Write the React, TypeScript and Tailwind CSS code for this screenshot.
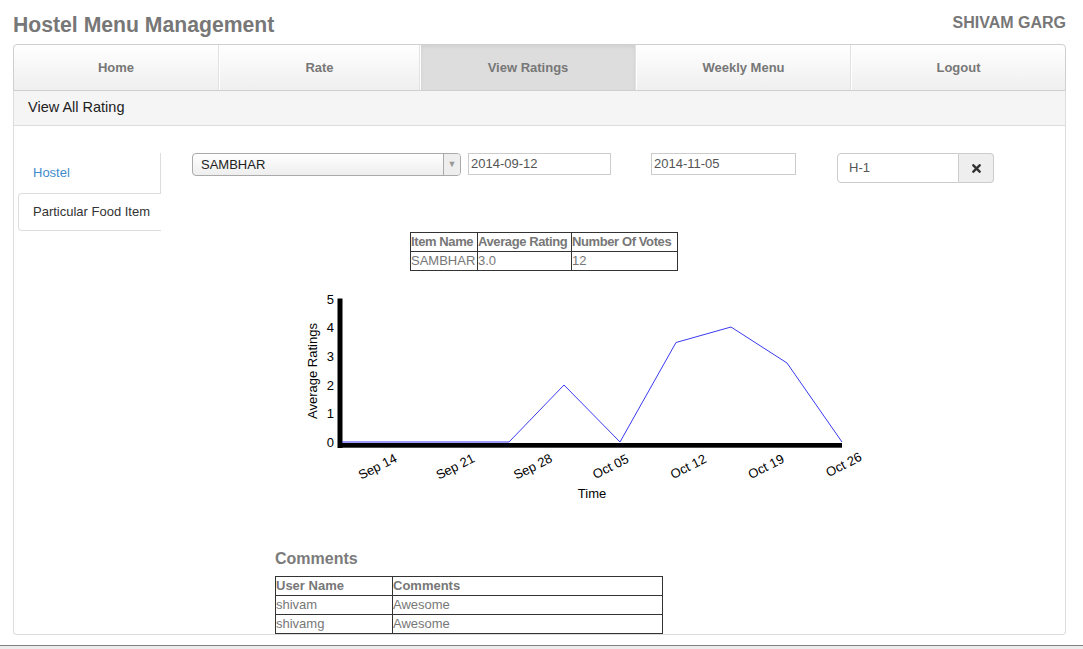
import React from "react";
import { FaTimes } from "react-icons/fa";

const navItems = [
    { label: "Home", w: "w-[205px]" },
    { label: "Rate", w: "w-[201px]" },
    { label: "View Ratings", w: "w-[216px]", active: true },
    { label: "Weekly Menu", w: "w-[215px]" },
    { label: "Logout", w: "w-[214px]" },
];

const ratingPoints = [
    [342, 441],
    [398, 441],
    [453, 441],
    [509, 441],
    [564, 384],
    [620, 441],
    [676, 341.5],
    [731, 326],
    [787, 362],
    [842, 441],
];

const weekLabels = ["Sep 14", "Sep 21", "Sep 28", "Oct 05", "Oct 12", "Oct 19", "Oct 26"];

const cell = "border border-[#333] p-0 text-left whitespace-nowrap overflow-hidden";

const RatingChart: React.FC = () => {
    return (
        <svg
            width={580}
            height={220}
            viewBox="290 285 580 220"
            className="block font-['Liberation_Sans',Arial,sans-serif]"
        >
            {/* axes */}
            <rect x={337.5} y={297.5} width={5} height={149.5} fill="#000" />
            <rect x={340} y={442} width={502} height={4.7} fill="#000" />

            {[0, 1, 2, 3, 4, 5].map((v) => (
                <text
                    key={v}
                    x={334}
                    y={441.5 - v * 28.7}
                    fontSize={13}
                    textAnchor="end"
                    dominantBaseline="central"
                    fill="#000"
                >
                    {v}
                </text>
            ))}

            <text
                x={312}
                y={370}
                fontSize={13}
                textAnchor="middle"
                dominantBaseline="central"
                transform="rotate(-90 312 370)"
                fill="#000"
            >
                Average Ratings
            </text>

            {weekLabels.map((label, i) => {
                const cx = 377.5 + i * 77.7;
                const cy = i === 6 ? 463.5 : 465.5;
                return (
                    <text
                        key={label}
                        x={cx}
                        y={cy}
                        fontSize={13}
                        textAnchor="middle"
                        dominantBaseline="central"
                        transform={`rotate(-27 ${cx} ${cy})`}
                        fill="#000"
                    >
                        {label}
                    </text>
                );
            })}

            <text x={592} y={492} fontSize={13} textAnchor="middle" dominantBaseline="central" fill="#000">
                Time
            </text>

            <polyline
                points={ratingPoints.map((p) => p.join(",")).join(" ")}
                fill="none"
                stroke="#3a3af2"
                strokeWidth={1}
            />
        </svg>
    );
};

const App: React.FC = () => {
    return (
        <div className="min-h-[649px] bg-white font-['Liberation_Sans',Arial,sans-serif]">
            <div className="pl-[13px] pr-[17px]">
                {/* header */}
                <div className="flex h-[44px] items-start justify-between pt-[14px]">
                    <h1 className="text-[21.2px] font-bold leading-none text-[#777]">Hostel Menu Management</h1>
                    <div className="mt-[1px] text-[16px] font-bold leading-none text-[#777]">SHIVAM GARG</div>
                </div>

                {/* nav */}
                <div className="flex h-[47px] overflow-hidden rounded-t-[4px] border border-[#cfcfcf] bg-gradient-to-b from-white to-[#efefef]">
                    {navItems.map((item, i) => (
                        <div
                            key={item.label}
                            className={
                                "flex shrink-0 items-center justify-center text-[13px] font-bold text-[#777] " +
                                item.w +
                                (i > 0 ? " border-l border-l-white" : "") +
                                (i < navItems.length - 1 ? " border-r border-r-[#e2e2e2]" : "") +
                                (item.active ? " bg-[#dddddd] shadow-[inset_0_2px_4px_rgba(0,0,0,0.06)]" : "")
                            }
                        >
                            {item.label}
                        </div>
                    ))}
                </div>

                {/* panel */}
                <div className="rounded-b-[4px] border border-t-0 border-[#dddddd]">
                    <div className="flex h-[35px] items-center border-b border-[#dddddd] bg-[#f5f5f5] px-[14px] text-[14.5px] text-[#222]">
                        View All Rating
                    </div>

                    <div className="flex pl-[4px] pt-[27px]">
                        {/* side tabs */}
                        <div className="w-[143px] shrink-0">
                            <div className="flex h-[40px] items-center border-r border-[#dddddd] pb-[1px] pl-[15px] text-[13px] text-[#428bca]">
                                Hostel
                            </div>
                            <div className="flex h-[38px] items-center rounded-l-[4px] border border-r-0 border-[#dddddd] pl-[14px] text-[13px] text-[#333]">
                                Particular Food Item
                            </div>
                        </div>

                        {/* content */}
                        <div className="ml-[31px] flex-1">
                            <div className="flex items-start">
                                <div className="flex h-[23px] w-[269px] items-center overflow-hidden rounded-[4px] border border-[#aaaaaa] bg-gradient-to-b from-white to-[#eeeeee]">
                                    <span className="flex-1 pl-[8px] text-[13px] text-[#222]">SAMBHAR</span>
                                    <span className="flex h-full w-[17px] items-center justify-center border-l border-[#aaaaaa] bg-[#eeeeee] text-[9px] text-[#999]">
                                        ▼
                                    </span>
                                </div>
                                <div className="ml-[7px] flex h-[22px] w-[143px] items-center border border-[#cccccc] pl-[2px] text-[13px] text-[#555]">
                                    2014-09-12
                                </div>
                                <div className="ml-[40px] flex h-[22px] w-[145px] items-center border border-[#cccccc] pl-[2px] text-[13px] text-[#555]">
                                    2014-11-05
                                </div>
                                <div className="ml-[41px] flex h-[30px]">
                                    <div className="flex w-[122px] items-center rounded-l-[4px] border border-[#cccccc] pl-[11px] text-[13px] text-[#555]">
                                        H-1
                                    </div>
                                    <div className="flex w-[35px] items-center justify-center rounded-r-[4px] border border-l-0 border-[#cccccc] bg-[#eeeeee] text-[#333]">
                                        <FaTimes size={13} />
                                    </div>
                                </div>
                            </div>

                            {/* summary table */}
                            <table className="ml-[218px] mt-[49px] table-fixed border-collapse text-[13px] leading-[18px] text-[#777]">
                                <thead>
                                    <tr>
                                        <th className={cell + " w-[67px] font-bold tracking-[-0.4px]"}>Item Name</th>
                                        <th className={cell + " w-[94px] font-bold tracking-[-0.4px]"}>Average Rating</th>
                                        <th className={cell + " w-[106px] font-bold tracking-[-0.4px]"}>Number Of Votes</th>
                                    </tr>
                                </thead>
                                <tbody>
                                    <tr>
                                        <td className={cell}>SAMBHAR</td>
                                        <td className={cell}>3.0</td>
                                        <td className={cell}>12</td>
                                    </tr>
                                </tbody>
                            </table>

                            <div className="ml-[98px] mt-[15px]">
                                <RatingChart />
                            </div>

                            {/* comments */}
                            <h4 className="ml-[83px] mt-[45px] text-[16px] font-bold leading-none text-[#7b7b7b]">Comments</h4>
                            <table className="ml-[83px] mt-[9px] table-fixed border-collapse text-[13px] leading-[18px] text-[#777]">
                                <thead>
                                    <tr>
                                        <th className={cell + " w-[117px] font-bold"}>User Name</th>
                                        <th className={cell + " w-[270px] font-bold"}>Comments</th>
                                    </tr>
                                </thead>
                                <tbody>
                                    <tr>
                                        <td className={cell}>shivam</td>
                                        <td className={cell}>Awesome</td>
                                    </tr>
                                    <tr>
                                        <td className={cell}>shivamg</td>
                                        <td className={cell}>Awesome</td>
                                    </tr>
                                </tbody>
                            </table>
                        </div>
                    </div>
                </div>
            </div>

            <div className="mt-[10px] h-[5px] border-t border-[#808080] bg-[#ececec]" />
        </div>
    );
};

export default App;
